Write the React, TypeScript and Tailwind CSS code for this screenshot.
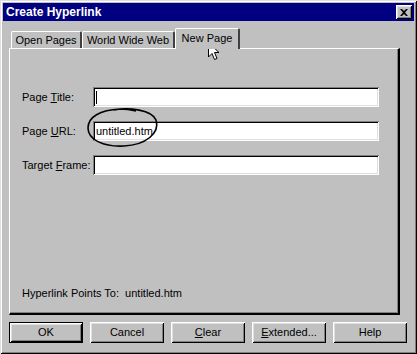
const raised =
  "shadow-[inset_1px_1px_0_#ffffff,inset_-1px_-1px_0_#000000,inset_2px_2px_0_#dfdfdf,inset_-2px_-2px_0_#808080]";
const sunken =
  "shadow-[inset_1px_1px_0_#808080,inset_-1px_-1px_0_#ffffff,inset_2px_2px_0_#000000,inset_-2px_-2px_0_#dfdfdf]";

const Field = ({ label, value, cursor }: { label: React.ReactNode; value?: string; cursor?: boolean }) => (
  <div className="flex items-center h-[20px]">
    <div className="w-[71px] whitespace-nowrap">{label}</div>
    <div className={`w-[286px] h-[20px] bg-white flex items-center pl-[3px] ${sunken}`}>
      {cursor && <div className="w-px h-[13px] bg-black" />}
      {value}
    </div>
  </div>
);

const Tab = ({ label, active, w }: { label: string; active?: boolean; w: string }) => (
  <div
    className={`${w} flex items-center justify-center rounded-t-[2px] border-l border-t border-white border-r-2 border-r-[#404040] ${
      active ? "h-[21px] -mb-px z-10 bg-[#c0c0c0] pb-[2px]" : "h-[17px] pt-[1px]"
    }`}
  >
    {label}
  </div>
);

const Btn = ({ children, def }: { children: React.ReactNode; def?: boolean }) => (
  <div
    className={`w-[74px] h-[21px] flex items-center justify-center ${
      def ? "border border-black " + raised : raised
    }`}
  >
    {children}
  </div>
);

export default function App() {
  return (
    <div
      className="relative w-[417px] h-[354px] bg-[#c0c0c0] text-[11px] text-black p-[3px] shadow-[inset_1px_1px_0_#dfdfdf,inset_-1px_-1px_0_#000000,inset_2px_2px_0_#ffffff,inset_-2px_-2px_0_#808080]"
      style={{ fontFamily: '"Liberation Sans", Arial, sans-serif' }}
    >
      {/* title bar */}
      <div className="h-[18px] bg-[#000080] flex items-center justify-between pl-[3px] pr-[2px]">
        <span className="text-white font-bold text-[12px]">Create Hyperlink</span>
        <div className={`w-[16px] h-[14px] bg-[#c0c0c0] flex items-center justify-center ${raised}`}>
          <svg width="8" height="7" viewBox="0 0 8 7">
            <path d="M0 0 L2 0 L4 2 L6 0 L8 0 L5 3.5 L8 7 L6 7 L4 5 L2 7 L0 7 L3 3.5 Z" fill="#000" />
          </svg>
        </div>
      </div>

      <div className="pl-[6px]">
        {/* tabs */}
        <div className="flex items-end h-[20px] mt-[7px] pl-[2px]">
          <Tab label="Open Pages" w="w-[71px]" />
          <Tab label="World Wide Web" w="w-[93px]" />
          <Tab label="New Page" w="w-[65px]" active />
        </div>

        {/* panel */}
        <div className="w-[391px] h-[267px] flex flex-col pl-[12px] pt-[38px] pb-[12px] border-l border-t border-white border-r-2 border-b-2 border-r-[#000000] border-b-[#000000] shadow-[inset_-1px_-1px_0_#808080]">
          <div className="flex flex-col gap-[14px]">
            <Field label={<>Page <u>T</u>itle:</>} cursor />
            <Field label={<>Page <u>U</u>RL:</>} value="untitled.htm" />
            <Field label={<>Target <u>F</u>rame:</>} />
          </div>
          <div className="mt-auto">Hyperlink Points To:&nbsp;&nbsp;untitled.htm</div>
        </div>

        {/* buttons */}
        <div className="flex gap-[7px] mt-[7px]">
          <Btn def>OK</Btn>
          <Btn>Cancel</Btn>
          <Btn>
            <span>
              <u>C</u>lear
            </span>
          </Btn>
          <Btn>
            <span>
              <u>E</u>xtended...
            </span>
          </Btn>
          <Btn>Help</Btn>
        </div>
      </div>

      {/* hand drawn circle */}
      <svg className="absolute left-[84px] top-[105px]" width="78" height="44" viewBox="0 0 78 44">
        <path
          d="M30 5 C45 2 68 5 72 15 C76 28 62 40 40 41 C20 42 4 35 4 23 C4 12 16 5 36 4 C42 4 48 5 52 6"
          fill="none"
          stroke="#000"
          strokeWidth="1.6"
        />
      </svg>

      {/* mouse pointer */}
      <svg className="absolute left-[208px] top-[42px]" width="13" height="20" viewBox="0 0 13 20">
        <path d="M0.5 0.5 L0.5 15 L4 11.5 L6.5 17.5 L9 16.5 L6.5 10.5 L11 10.5 Z" fill="#fff" stroke="#000" strokeWidth="1" />
      </svg>
    </div>
  );
}
